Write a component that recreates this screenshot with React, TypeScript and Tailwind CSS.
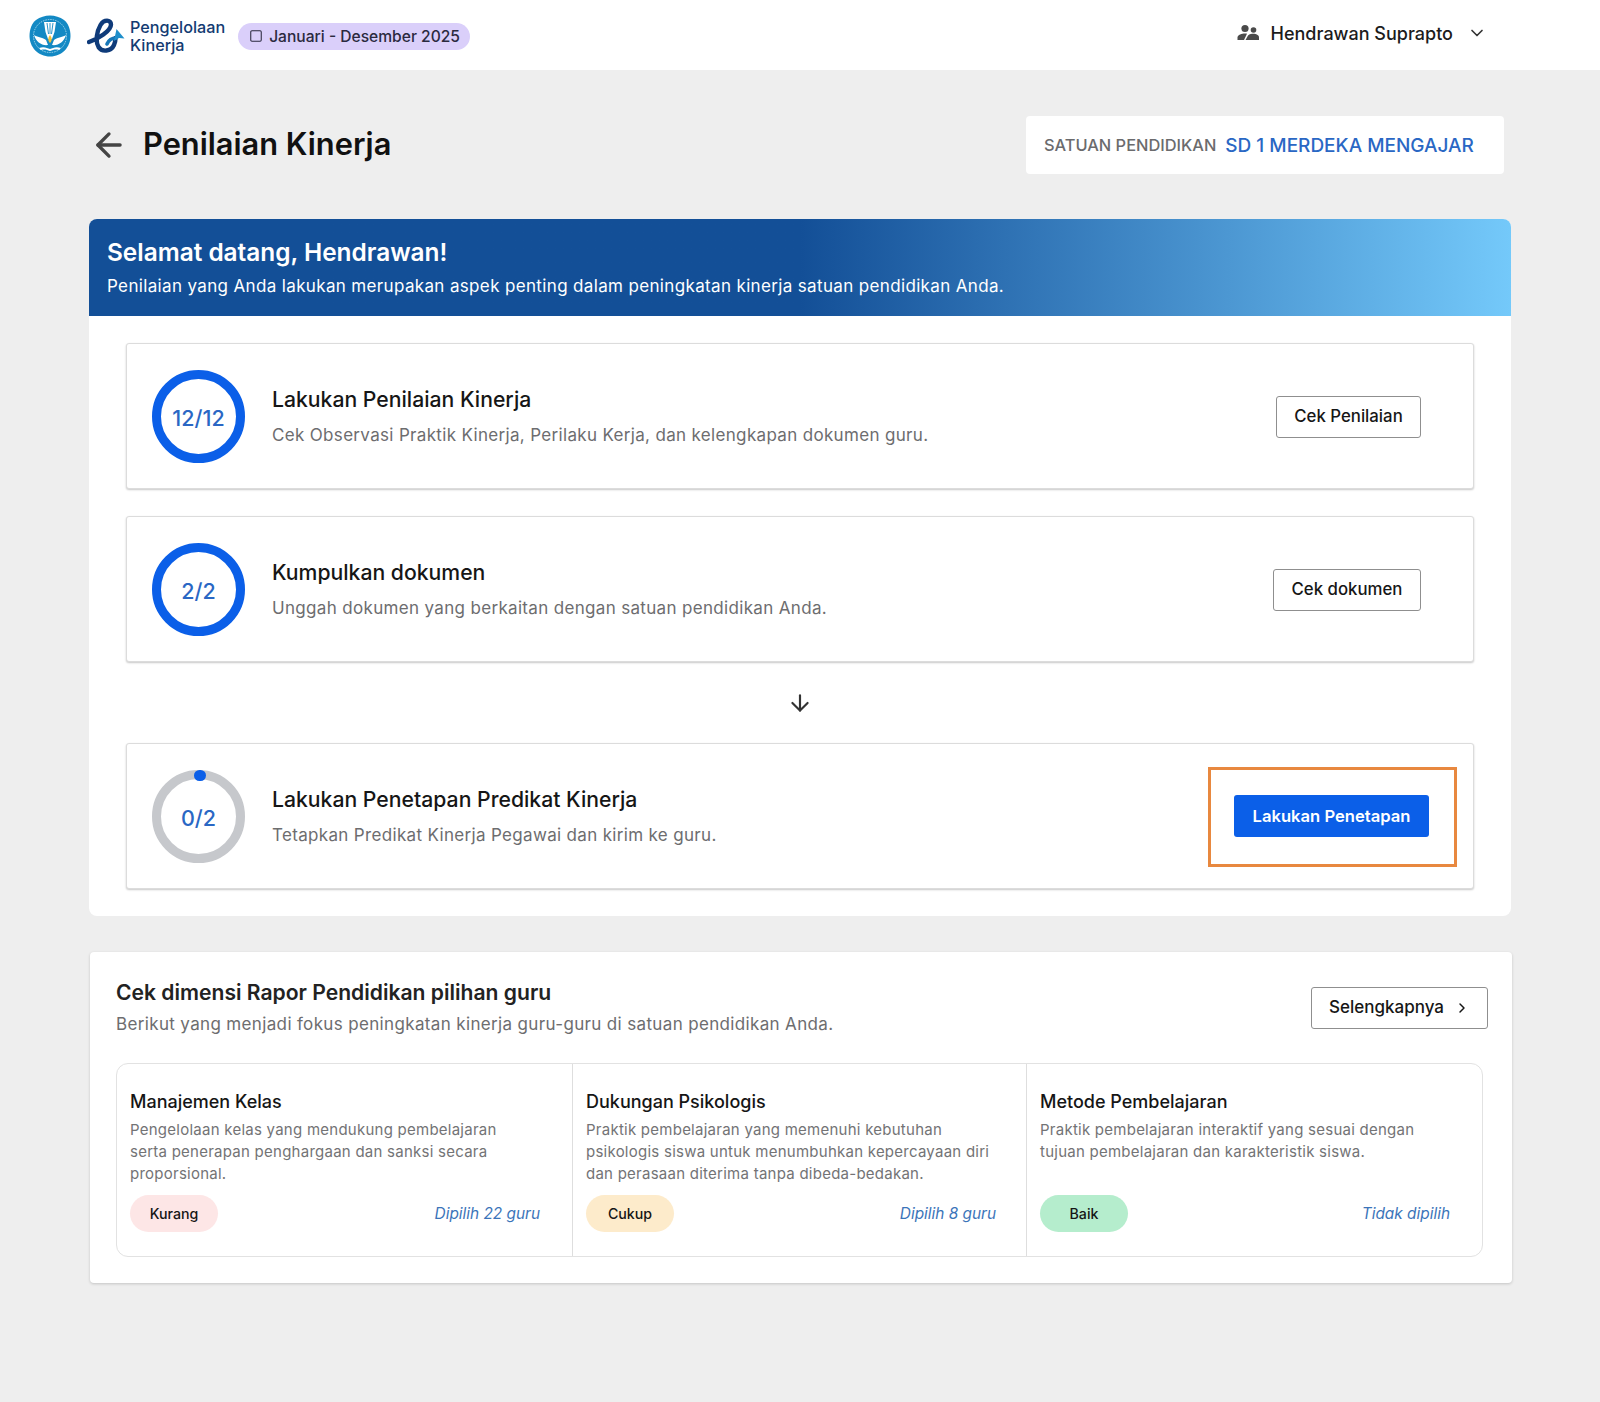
import React from "react";
import { ArrowLeft, ArrowDown, ChevronDown, ChevronRight, Square } from "lucide-react";

function Emblem() {
  return (
    <svg width="42" height="42" viewBox="0 0 42 42">
      <path d="M21 0.5 C26 0.5 31 2 35 5 C39 8 41.5 14 41.5 21 C41.5 32 33 41.5 21 41.5 C9 41.5 0.5 32 0.5 21 C0.5 14 3 8 7 5 C11 2 16 0.5 21 0.5Z" fill="#1389c4" />
      <circle cx="21" cy="21" r="16.5" fill="none" stroke="#bfe3f2" strokeWidth="0.8" strokeDasharray="1.5 1" />
      <path d="M15 7 L27 7 L25.5 17 L23 24 L19 24 L16.5 17Z" fill="#ffffff" />
      <path d="M18 8 L19.5 19 M21 8 L21 19 M24 8 L22.5 19" stroke="#1389c4" strokeWidth="0.9" />
      <path d="M5 20 C8 22 13 22 17 25 L19 30 C13 31 7 27 5 20Z" fill="#ffffff" />
      <path d="M37 20 C34 22 29 22 25 25 L23 30 C29 31 35 27 37 20Z" fill="#ffffff" />
      <path d="M21 20 C23 23 23.5 25 21 28 C18.5 25 19 23 21 20Z" fill="#f3c13a" />
      <path d="M10 33 C15 31 18 33 21 34 C24 33 27 31 32 33 L30 35 C26 34 24 35 21 36 C18 35 16 34 12 35Z" fill="#ffffff" />
    </svg>
  );
}

function ELogo() {
  return (
    <svg width="38" height="36" viewBox="0 0 38 36">
      <path d="M2 24 C11 21 24 13 24 6.5 C24 1.5 17 1 13.5 7 C10 13 8 23 11.5 29 C15 34.5 24 33.5 27 27 C28 25 28.5 23 28.5 20" fill="none" stroke="#0f3b7a" strokeWidth="4.4" strokeLinecap="round" />
      <path d="M20 26 C22 21.5 25 20 29 20" fill="none" stroke="#1777b8" strokeWidth="3.6" strokeLinecap="round" />
      <path d="M29.5 11 L37.5 20.5 L32 20 L27 23Z" fill="#1f8fcb" />
    </svg>
  );
}

function Ring({ label, empty }: { label: string; empty?: boolean }) {
  return (
    <div className={`relative flex h-[93px] w-[93px] shrink-0 items-center justify-center rounded-full border-[9px] ${empty ? "border-[#c6c8cc]" : "border-[#0b5fe8]"}`}>
      {empty && <span className="absolute top-[-9px] left-[33px] h-[11px] w-[12px] rounded-full bg-[#0b5fe8]" />}
      <span className="mt-[4px] text-[21.5px] font-medium text-[#2a67c4]">{label}</span>
    </div>
  );
}

function Step({ label, title, desc, empty, children }: { label: string; title: string; desc: string; empty?: boolean; children: React.ReactNode }) {
  return (
    <div className="flex h-[146px] items-center rounded-[3px] border border-[#dcdcdc] bg-white pl-[25px] shadow-[0_1px_2px_rgba(0,0,0,0.22)]">
      <Ring label={label} empty={empty} />
      <div className="ml-[27px] flex-1">
        <div className="text-[21.2px] leading-[28px] font-medium text-[#161616]">{title}</div>
        <div className="mt-[9px] text-[17px] leading-[26px] tracking-[0.33px] text-[#6d6d6f]">{desc}</div>
      </div>
      {children}
    </div>
  );
}

function OutlineBtn({ children, className }: { children: React.ReactNode; className: string }) {
  return (
    <button className={`flex h-[42px] items-center justify-center rounded-[3px] border border-[#8f8f8f] bg-white text-[16.8px] font-medium text-[#161616] ${className}`}>
      {children}
    </button>
  );
}

function Cell({ title, desc, pill, pillClass, note, pr, border }: { title: string; desc: string[]; pill: string; pillClass: string; note: string; pr: string; border?: boolean }) {
  return (
    <div className={`flex flex-col pt-[26px] pb-[24px] pl-[13px] ${pr} ${border ? "border-l border-[#dedede]" : ""}`}>
      <div className="text-[18px] leading-[24px] font-medium text-[#161616]">{title}</div>
      <div className="mt-[5px] h-[66px] text-[15px] leading-[22px] tracking-[0.25px] text-[#737375]">
        {desc.map((d) => (
          <div key={d}>{d}</div>
        ))}
      </div>
      <div className="mt-[10px] flex items-center justify-between">
        <span className={`flex h-[37px] w-[88px] items-center justify-center rounded-full text-[14.2px] font-medium text-[#161616] ${pillClass}`}>{pill}</span>
        <span className="text-[15.4px] text-[#3b74b9] italic">{note}</span>
      </div>
    </div>
  );
}

export default function App() {
  return (
    <div className="min-h-[1402px] bg-[#eeeeee] font-['Inter',sans-serif]">
      <header className="flex h-[70px] items-center bg-white pt-[2px] pl-[29px]">
        <Emblem />
        <div className="ml-[16px]">
          <ELogo />
        </div>
        <div className="ml-[5px] text-[16.2px] leading-[18.5px] font-medium text-[#133b72]">
          <div>Pengelolaan</div>
          <div>Kinerja</div>
        </div>
        <div className="ml-[13px] flex h-[27px] w-[232px] items-center rounded-full bg-[#dacffa] pl-[11px] text-[15.6px] font-medium text-[#2b2a3f]">
          <Square size={14} strokeWidth={1.8} />
          <span className="mt-[2px] ml-[6px]">Januari - Desember 2025</span>
        </div>
        <div className="mr-[113px] ml-auto flex items-center pb-[6px] text-[#1c1c1c]">
          <svg width="24" height="24" viewBox="0 0 24 24" fill="#4a4a4a">
            <circle cx="9" cy="7.5" r="3.6" />
            <circle cx="17.5" cy="9" r="2.8" />
            <path d="M1.5 19 L1.5 16.5 C1.5 14 6 12.6 9 12.6 C10 12.6 10.6 12.7 11 12.8 L8 19Z" />
            <path d="M9.5 19 L12 14.6 C13.4 13 16 12.8 17.5 12.8 C20 12.8 23 14 23 16.5 L23 19Z" />
          </svg>
          <span className="ml-[11px] text-[18px] font-medium">Hendrawan Suprapto</span>
          <ChevronDown size={20} strokeWidth={2} className="ml-[14px] text-[#333333]" />
        </div>
      </header>

      <main className="w-[1511px] pl-[89px]">
        <div className="flex h-[149px] items-center justify-between pr-[7px]">
          <div className="flex items-center">
            <ArrowLeft size={38} strokeWidth={2.1} className="ml-[1px] text-[#444444]" />
            <h1 className="ml-[15px] text-[30.8px] font-semibold text-[#111111]">Penilaian Kinerja</h1>
          </div>
          <div className="flex h-[58px] w-[478px] items-center rounded-[4px] bg-white pl-[18px]">
            <span className="mt-[1px] text-[16.4px] font-medium text-[#6b6b6d]">SATUAN PENDIDIKAN</span>
            <span className="mt-[3px] ml-[9px] text-[19px] font-medium text-[#2a67c4]">SD 1 MERDEKA MENGAJAR</span>
          </div>
        </div>

        <section className="rounded-[8px] bg-white pb-[27px]">
          <div className="flex h-[97px] flex-col justify-center rounded-t-[8px] bg-gradient-to-r from-[#134f97] from-[50%] to-[#74c9fa] px-[18px] pb-[2px] text-white">
            <div className="text-[24.4px] leading-[34px] font-semibold">Selamat datang, Hendrawan!</div>
            <div className="mt-[4px] text-[17px] leading-[26px] tracking-[0.35px]">Penilaian yang Anda lakukan merupakan aspek penting dalam peningkatan kinerja satuan pendidikan Anda.</div>
          </div>
          <div className="flex flex-col px-[37px] pt-[27px]">
            <Step label="12/12" title="Lakukan Penilaian Kinerja" desc="Cek Observasi Praktik Kinerja, Perilaku Kerja, dan kelengkapan dokumen guru.">
              <OutlineBtn className="mt-[2px] mr-[52px] w-[145px]">Cek Penilaian</OutlineBtn>
            </Step>
            <div className="h-[27px]" />
            <Step label="2/2" title="Kumpulkan dokumen" desc="Unggah dokumen yang berkaitan dengan satuan pendidikan Anda.">
              <OutlineBtn className="mt-[2px] mr-[52px] w-[148px]">Cek dokumen</OutlineBtn>
            </Step>
            <div className="flex h-[81px] items-center justify-center">
              <ArrowDown size={26} strokeWidth={2} className="text-[#333333]" />
            </div>
            <Step label="0/2" title="Lakukan Penetapan Predikat Kinerja" desc="Tetapkan Predikat Kinerja Pegawai dan kirim ke guru." empty>
              <div className="mt-[2px] mr-[16px] flex h-[100px] w-[249px] items-center justify-center border-[3px] border-[#e8883f] pr-[2px] pb-[2px]">
                <button className="flex h-[42px] w-[195px] items-center justify-center rounded-[3px] bg-[#0b5fe8] text-[16.6px] font-semibold text-white">Lakukan Penetapan</button>
              </div>
            </Step>
          </div>
        </section>

        <section className="mt-[36px] ml-[1px] h-[331px] w-[1422px] rounded-[4px] bg-white pt-[28px] pr-[24px] pl-[26px] shadow-[0_1px_3px_rgba(0,0,0,0.18)]">
          <div className="flex items-start justify-between">
            <div>
              <h2 className="text-[21.1px] leading-[26px] font-semibold text-[#222222]">Cek dimensi Rapor Pendidikan pilihan guru</h2>
              <p className="mt-[5px] text-[17px] leading-[26px] tracking-[0.35px] text-[#6d6d6f]">Berikut yang menjadi fokus peningkatan kinerja guru-guru di satuan pendidikan Anda.</p>
            </div>
            <OutlineBtn className="mt-[7px] w-[177px] gap-[10px] text-[17px]">
              Selengkapnya
              <ChevronRight size={16} strokeWidth={2.2} />
            </OutlineBtn>
          </div>
          <div className="mt-[26px] grid h-[194px] w-[1367px] grid-cols-[455px_454px_458px] rounded-[12px] border border-[#e2e2e2]">
            <Cell title="Manajemen Kelas" desc={["Pengelolaan kelas yang mendukung pembelajaran", "serta penerapan penghargaan dan sanksi secara", "proporsional."]} pill="Kurang" pillClass="bg-[#fde6e6]" note="Dipilih 22 guru" pr="pr-[32px]" />
            <Cell border title="Dukungan Psikologis" desc={["Praktik pembelajaran yang memenuhi kebutuhan", "psikologis siswa untuk menumbuhkan kepercayaan diri", "dan perasaan diterima tanpa dibeda-bedakan."]} pill="Cukup" pillClass="bg-[#fdebcb]" note="Dipilih 8 guru" pr="pr-[30px]" />
            <Cell border title="Metode Pembelajaran" desc={["Praktik pembelajaran interaktif yang sesuai dengan", "tujuan pembelajaran dan karakteristik siswa."]} pill="Baik" pillClass="bg-[#b5edcd]" note="Tidak dipilih" pr="pr-[34px]" />
          </div>
        </section>
      </main>
    </div>
  );
}
